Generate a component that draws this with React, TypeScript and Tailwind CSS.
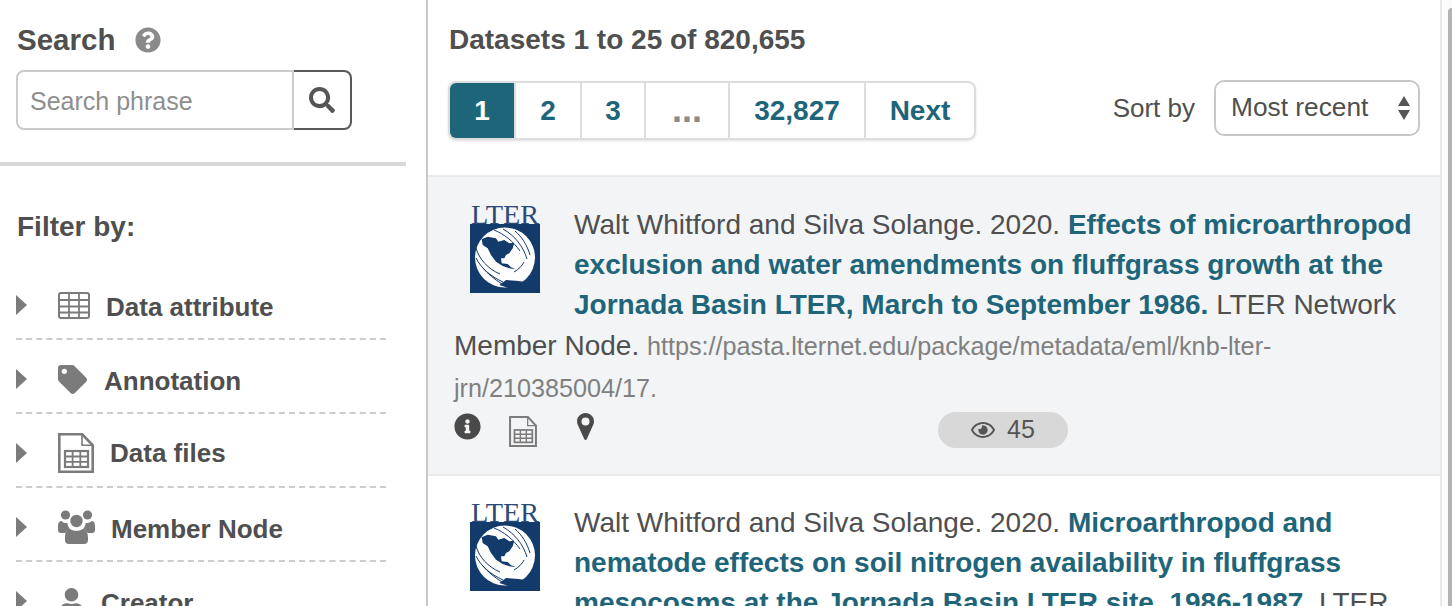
import React from "react";
import { FaQuestionCircle, FaSearch, FaTag, FaUser, FaInfoCircle, FaRegEye } from "react-icons/fa";

function TableIcon() {
  return (
    <svg width="32" height="27" viewBox="0 0 32 27" className="text-[#7b7b7b]">
      <rect x="1" y="1" width="30" height="25" rx="2" fill="none" stroke="currentColor" strokeWidth="2" />
      <path d="M1 8h30M1 14.500h30M1 20.500h30M11 1v25M21 1v25" stroke="currentColor" strokeWidth="1.800" fill="none" />
    </svg>
  );
}

function FileTableIcon({ w, h }: { w: number; h: number }) {
  return (
    <svg width={w} height={h} viewBox="0 0 36 40" className="text-[#7b7b7b]">
      <path d="M1.300 1.300h23l10.400 11v26.400H1.300z" fill="none" stroke="currentColor" strokeWidth="2.600" />
      <path d="M24 1.300v11h10.700" fill="none" stroke="currentColor" strokeWidth="1.600" />
      <rect x="7" y="18" width="23" height="16" fill="none" stroke="currentColor" strokeWidth="2.200" />
      <path d="M7 23.500h23M7 28.800h23M14.600 18v16M22.300 18v16" stroke="currentColor" strokeWidth="1.800" fill="none" />
    </svg>
  );
}

function UsersIcon() {
  return (
    <svg width="37" height="34" viewBox="0 0 37 34" className="text-[#7b7b7b]" fill="currentColor">
      <circle cx="7.500" cy="5" r="4.600" />
      <circle cx="29.500" cy="5" r="4.600" />
      <circle cx="18.500" cy="11" r="6.200" />
      <path d="M0 15.500c0-3 1.500-4.500 3.500-4.500 1 1 2.500 2 4 2 .6 0 1.200-.1 1.800-.3.2 2.300 1 4.200 2.400 5.800-2 1-3.500 2.500-4.300 4.500H3c-2 0-3-1.200-3-3z" />
      <path d="M37 15.500c0-3-1.500-4.500-3.500-4.500-1 1-2.500 2-4 2-.6 0-1.200-.1-1.800-.3-.2 2.300-1 4.200-2.400 5.800 2 1 3.500 2.500 4.300 4.500H34c2 0 3-1.200 3-3z" />
      <path d="M11.500 18.500c1.800 1.500 4.300 2.300 7 2.300s5.200-.8 7-2.300c2.800 1 4.500 4 4.500 9.500v2c0 2.500-1.500 4-4 4H11c-2.500 0-4-1.500-4-4v-2c0-5.500 1.700-8.500 4.500-9.500z" />
    </svg>
  );
}

function MarkerIcon() {
  return (
    <svg width="17" height="27" viewBox="0 0 17 27" className="text-[#4a4a4a] ml-[40px] mt-[1px]">
      <path fillRule="evenodd" clipRule="evenodd" d="M8.500 0C13.200 0 17 3.700 17 8.400c0 1.600-.5 3-1.200 4.300L9.800 26c-.3.600-.8 1-1.300 1s-1-.4-1.300-1L1.200 12.700C.5 11.400 0 10 0 8.400 0 3.700 3.800 0 8.500 0zm0 4.400a4 4 0 1 0 0 8 4 4 0 0 0 0-8z" fill="currentColor" />
    </svg>
  );
}

function LterLogo() {
  return (
    <svg width="70" height="88" viewBox="0 0 70 88" className="float-left ml-[16px] mr-[34px] mb-[8px]">
      <text x="35" y="18.500" textAnchor="middle" fontFamily="'Liberation Serif', serif" fontSize="27" fill="#2b4a77" textLength="68" lengthAdjust="spacingAndGlyphs">LTER</text>
      <rect x="0" y="19" width="70" height="69" fill="#123a6b" />
      <circle cx="35" cy="52.500" r="30" fill="#ffffff" />
      <path d="M11.700 34.300L17.700 31.700 26 33.300 28.300 36.700 34.300 35 39.300 38.300 44.300 37.700 42.700 43.300 39.300 48.300 36 50 34.300 53.300 31 53.300 31.700 58.300 37.700 59 41 62.300 46 64.300 39.300 63.300 32.700 61 26 56.700 21 50 17.700 43.300 12.700 40z" fill="#123a6b" />
      <path d="M29.300 80L36 75 46 75.700 54.300 76.700 49.300 81.700 39.300 83.300z" fill="#123a6b" />
      <path d="M6 43c3 11 12 21 24 26M6 53c5 10 14 18 27 24M12 62c6 7 12 12 20 17M33 24c12 7 20 17 24 30M45 26c7 6 12 14 15 24M24 25c10 4 19 11 26 21M44 67c5-3 8-6 10-10" fill="none" stroke="#123a6b" strokeWidth="1" />
    </svg>
  );
}

const filters: { label: string; icon: React.ReactNode; iconW: string; labelPad: string }[] = [
  { label: "Data attribute", icon: <TableIcon />, iconW: "w-[48px]", labelPad: "pt-[4px]" },
  { label: "Annotation", icon: <FaTag className="text-[#7b7b7b] text-[29px]" />, iconW: "w-[46px]", labelPad: "pt-[4px]" },
  { label: "Data files", icon: <FileTableIcon w={36} h={40} />, iconW: "w-[52px]", labelPad: "pt-0" },
  { label: "Member Node", icon: <UsersIcon />, iconW: "w-[53px]", labelPad: "pt-[4px]" },
  { label: "Creator", icon: <FaUser className="text-[#7b7b7b] text-[27px]" />, iconW: "w-[43px]", labelPad: "pt-[4px]" },
];

function Citation({ title, tail, url, className }: { title: string; tail: string; url?: string; className: string }) {
  return (
    <div className={`text-[28px] leading-[40px] text-[#4f4f4f] pl-[26px] pr-[19px] ${className}`}>
      <LterLogo />
      Walt Whitford and Silva Solange. 2020.{" "}
      <span className="font-bold text-[#1e6579]">{title}</span> {tail}{" "}
      {url && <span className="text-[25.200px] leading-[42px] text-[#808080]">{url}</span>}
    </div>
  );
}

export default function App() {
  return (
    <div className="flex h-[606px] w-[1452px] overflow-hidden bg-white font-['Liberation_Sans',Arial,sans-serif] text-[#4f4f4f]">
      <aside className="w-[428px] shrink-0 border-r-2 border-[#c8c8c8] pr-[20px]">
        <div className="border-b-4 border-[#d8d8d8] pl-[16px] pt-[22px] h-[166px]">
          <div className="flex items-center h-[36px]">
            <h2 className="text-[29.500px] font-bold leading-[36px] pl-[1px]">Search</h2>
            <FaQuestionCircle className="ml-[20px] text-[26px] text-[#8a8a8a]" />
          </div>
          <div className="flex mt-[12px] h-[60px] w-[336px]">
            <div className="flex-1 border-2 border-[#cbcbcb] rounded-l-[8px] pl-[12px] pt-[3px] text-[25px] text-[#8e8e8e] flex items-center">Search phrase</div>
            <div className="w-[58px] border-2 border-l-0 border-[#5a5a5a] rounded-r-[8px] flex items-center justify-center">
              <FaSearch className="text-[26px] text-[#555555]" />
            </div>
          </div>
        </div>
        <div className="pl-[16px] pr-[20px]">
          <h3 className="text-[28px] font-bold leading-[34px] pt-[44px] pl-[1px] mb-[22px]">Filter by:</h3>
          {filters.map((f) => (
            <div key={f.label} className="h-[74px] flex items-center border-b-2 border-dashed border-[#cccccc] pt-[6px]">
              <svg width="11" height="20" viewBox="0 0 11 20" className="shrink-0 mr-[31px]"><path d="M0 0l11 10L0 20z" fill="#7b7b7b" /></svg>
              <span className={`${f.iconW} shrink-0`}>{f.icon}</span>
              <span className={`text-[26px] font-bold ${f.labelPad}`}>{f.label}</span>
            </div>
          ))}
        </div>
      </aside>
      <main className="flex-1 min-w-0">
        <div className="h-[177px] border-b-2 border-[#e9ebed] pl-[21px] pr-[20px] pt-[22px]">
          <h2 className="text-[28px] font-bold leading-[36px]">Datasets 1 to 25 of 820,655</h2>
          <div className="flex items-start justify-between mt-[22px]">
            <nav className="flex h-[59px] -ml-[1px] mt-[1px] border-2 border-[#dddddd] rounded-[8px] overflow-hidden text-[28px] font-bold text-[#1e6579] shadow-sm">
              <span className="w-[64px] flex items-center justify-center bg-[#1e6579] text-white">1</span>
              <span className="w-[66px] flex items-center justify-center border-l-2 border-[#dddddd]">2</span>
              <span className="w-[64px] flex items-center justify-center border-l-2 border-[#dddddd]">3</span>
              <span className="w-[84px] flex items-center justify-center border-l-2 border-[#dddddd] text-[#8a8a8a] text-[36px] pb-[2px]">...</span>
              <span className="w-[136px] flex items-center justify-center border-l-2 border-[#dddddd]">32,827</span>
              <span className="w-[110px] flex items-center justify-center border-l-2 border-[#dddddd]">Next</span>
            </nav>
            <div className="flex items-center text-[26px]">
              <span className="mr-[19px]">Sort by</span>
              <div className="w-[206px] h-[56px] border-2 border-[#c8c8c8] rounded-[10px] flex items-center justify-between pl-[15px] pr-[8px]">
                <span className="leading-[50px] -mt-[2px] text-[26.300px]">Most recent</span>
                <svg width="12" height="24" viewBox="0 0 12 24"><path d="M6 0l6 10H0zM6 24L0 14h12z" fill="#555555" /></svg>
              </div>
            </div>
          </div>
        </div>
        <article className="h-[299px] bg-[#f2f4f6] border-b-2 border-[#e9ebed]">
          <Citation
            className="pt-[28px]"
            title="Effects of microarthropod exclusion and water amendments on fluffgrass growth at the Jornada Basin LTER, March to September 1986."
            tail="LTER Network Member Node."
            url="https://pasta.lternet.edu/package/metadata/eml/knb-lter-jrn/210385004/17."
          />
          <div className="flex items-start pl-[26px] mt-[3px] h-[40px]">
            <FaInfoCircle className="text-[27px] text-[#4a4a4a] mt-[1px]" />
            <span className="ml-[28px] mt-[4px]"><FileTableIcon w={28} h={31} /></span>
            <MarkerIcon />
            <div className="ml-[344px] w-[130px] h-[36px] rounded-full bg-[#d8d8d8] flex items-center justify-center gap-[12px] text-[25px] text-[#555555]">
              <FaRegEye className="text-[24px]" />
              <span>45</span>
            </div>
          </div>
        </article>
        <article>
          <Citation
            className="pt-[27px]"
            title="Microarthropod and nematode effects on soil nitrogen availability in fluffgrass mesocosms at the Jornada Basin LTER site, 1986-1987."
            tail="LTER Network Member Node."
          />
        </article>
      </main>
      <div className="w-[12px] shrink-0 border-l-2 border-[#e8e8e8] bg-[#fafafa] pt-[8px] flex justify-end">
        <div className="w-[4px] h-full bg-[#b3b3b3] rounded-tl-[4px]" />
      </div>
    </div>
  );
}
